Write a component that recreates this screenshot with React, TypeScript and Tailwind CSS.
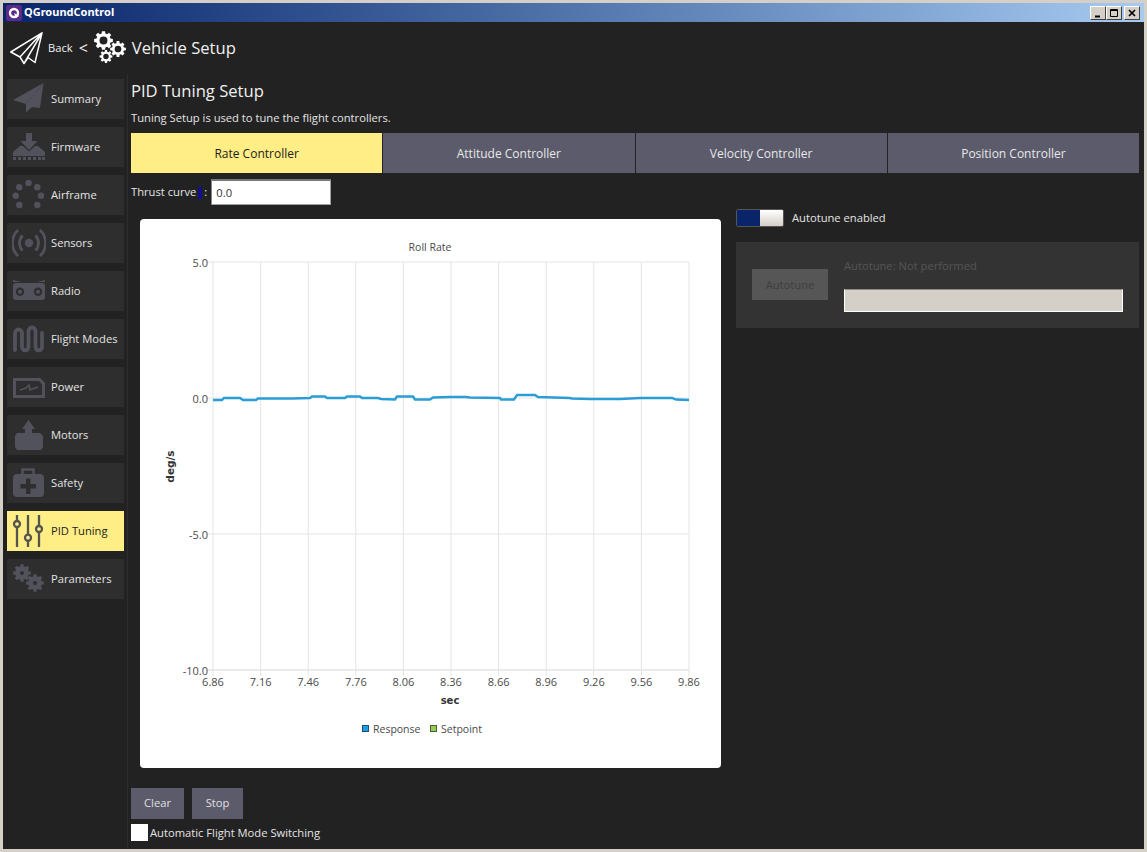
import React from "react";

const IC = "#52525c";

function gearPath(cx: number, cy: number, ro: number, ri: number, hole: number, teeth: number) {
  const pts: string[] = [];
  const step = (Math.PI * 2) / teeth;
  for (let i = 0; i < teeth; i++) {
    const a = i * step;
    const w = step * 0.27;
    const list: [number, number][] = [
      [a - w * 1.25, ri],
      [a - w * 0.8, ro],
      [a + w * 0.8, ro],
      [a + w * 1.25, ri],
    ];
    for (const [ang, r] of list) pts.push(`${(cx + Math.cos(ang) * r).toFixed(2)} ${(cy + Math.sin(ang) * r).toFixed(2)}`);
  }
  return `M${pts.join("L")}Z M${cx + hole} ${cy}A${hole} ${hole} 0 1 0 ${cx - hole} ${cy}A${hole} ${hole} 0 1 0 ${cx + hole} ${cy}Z`;
}

function Gear({ cx, cy, r, fill, teeth = 8, hole = 0.42 }: { cx: number; cy: number; r: number; fill: string; teeth?: number; hole?: number }) {
  return <path d={gearPath(cx, cy, r, r * 0.76, r * hole, teeth)} fill={fill} fillRule="evenodd" />;
}

const icons: Record<string, React.ReactNode> = {
  Summary: (
    <svg width="34" height="34" viewBox="0 0 34 34">
      <path d="M31.500 1 L1 18 L14 22 L14 30.500 L20 25 L28 26Z" fill={IC} />
      <path d="M31 2 L14 22" stroke="#46464f" strokeWidth="0.800" />
    </svg>
  ),
  Firmware: (
    <svg width="34" height="34" viewBox="0 0 34 34">
      <path d="M14 3h6v8h5.500l-8.500 9-8.500-9h5.500z" fill={IC} />
      <path d="M1 22 L8 16 L11 16 L17 21.500 L23 16 L26 16 L33 22 V26 H1Z" fill={IC} />
      <path d="M1 27h3v3H1zM6 27h3v3H6zM11 27h3v3h-3zM16 27h3v3h-3zM21 27h3v3h-3zM26 27h3v3h-3zM30 27h3v3h-3z" fill={IC} />
    </svg>
  ),
  Airframe: (
    <svg width="34" height="34" viewBox="0 0 34 34" fill={IC}>
      <circle cx="16.500" cy="5" r="3.200" />
      <circle cx="7.300" cy="9.300" r="3.200" />
      <circle cx="25.300" cy="9.300" r="3.200" />
      <circle cx="3.700" cy="17.700" r="3.200" />
      <circle cx="29" cy="17.700" r="3.200" />
      <circle cx="7.300" cy="27" r="3.200" />
      <circle cx="25.300" cy="27" r="3.200" />
    </svg>
  ),
  Sensors: (
    <svg width="34" height="34" viewBox="0 0 34 34" fill="none" stroke={IC}>
      <circle cx="17" cy="17" r="4.200" fill={IC} stroke="none" />
      <path d="M10.500 9.500a11 11 0 0 0 0 15M23.500 9.500a11 11 0 0 1 0 15" strokeWidth="2.800" />
      <path d="M6 4a18 18 0 0 0 0 26M28 4a18 18 0 0 1 0 26" strokeWidth="2.800" />
    </svg>
  ),
  Radio: (
    <svg width="34" height="34" viewBox="0 0 34 34">
      <path d="M1 6l8 2H1zM33 6l-8 2h8z" fill={IC} />
      <rect x="1" y="9" width="32" height="17" rx="3" fill={IC} />
      <circle cx="8" cy="17.700" r="4.200" fill="#2e2e2e" />
      <circle cx="26" cy="17.700" r="4.200" fill="#2e2e2e" />
      <circle cx="8" cy="17.700" r="2" fill={IC} />
      <circle cx="26" cy="17.700" r="2" fill={IC} />
    </svg>
  ),
  "Flight Modes": (
    <svg width="34" height="34" viewBox="0 0 34 34" fill="none">
      <path d="M3 28V11a3.500 3.500 0 0 1 7 0V25a3.250 3.250 0 0 0 6.500 0V9a3.500 3.500 0 0 1 7 0V25a3.250 3.250 0 0 0 6.500 0V11" stroke={IC} strokeWidth="3.800" strokeLinecap="round" />
    </svg>
  ),
  Power: (
    <svg width="34" height="34" viewBox="0 0 34 34" fill="none">
      <path d="M2.500 9.500h25l4 4v13h-29z" stroke={IC} strokeWidth="3" />
      <path d="M8 20l6-2 3-3 1 5 8-3" stroke={IC} strokeWidth="1.500" />
    </svg>
  ),
  Motors: (
    <svg width="34" height="34" viewBox="0 0 34 34">
      <path d="M16.500 2l6.500 9h-3v5h-7v-5h-3z" fill={IC} />
      <path d="M5 15h23l3 3v11l-2 3H5l-2-3V18z" fill={IC} />
    </svg>
  ),
  Safety: (
    <svg width="34" height="34" viewBox="0 0 34 34" fill="none">
      <path d="M10.500 10V3.500h11V10" stroke={IC} strokeWidth="2.500" />
      <rect x="1" y="8" width="31" height="23" rx="4" fill={IC} />
      <path d="M14 12.500h4.500v5.500h5.500v4.500h-5.500v5.500H14v-5.500H8.500V18H14z" fill="#2e2e2e" />
    </svg>
  ),
  "PID Tuning": (
    <svg width="34" height="34" viewBox="0 0 34 34" fill="none" stroke="#55554f" strokeWidth="2.300">
      <path d="M5 1v6M5 13v20M16 1v19.700M16 26.700v6.300M27 1v11M27 18v15" />
      <circle cx="5" cy="10" r="3" />
      <circle cx="16" cy="23.700" r="3" />
      <circle cx="27" cy="15" r="3" />
    </svg>
  ),
  Parameters: (
    <svg width="34" height="34" viewBox="0 0 34 34">
      <Gear cx={10} cy={11} r={9} fill={IC} hole={0.22} />
      <Gear cx={23} cy={21} r={9} fill={IC} hole={0.22} />
    </svg>
  ),
};

const menu = ["Summary", "Firmware", "Airframe", "Sensors", "Radio", "Flight Modes", "Power", "Motors", "Safety", "PID Tuning", "Parameters"];

function SideButton({ name }: { name: string }) {
  const active = name === "PID Tuning";
  return (
    <div className={`flex h-10 w-[117px] items-center ${active ? "bg-[#ffed86] text-[#1d1d1d]" : "bg-[#2e2e2e] text-[#e4e4e4]"}`}>
      <div className="flex w-11 shrink-0 justify-end pr-[5px]">{icons[name]}</div>
      <span className="whitespace-nowrap">{name}</span>
    </div>
  );
}

function Chart() {
  const xs = ["6.86", "7.16", "7.46", "7.76", "8.06", "8.36", "8.66", "8.96", "9.26", "9.56", "9.86"];
  const ys: [string, number][] = [["5.0", 262], ["0.0", 398], ["-5.0", 534], ["-10.0", 670]];
  const line =
    "213,400 222,400 224,398 240,398 243,400 256,400 258,398.500 275,398.500 292,398.500 310,398 312,396.500 325,396.500 327,398 345,398 347,396.500 360,396.500 362,398 378,398 381,399 395,399.500 397,396.500 413,396.500 415,399.500 430,399.500 433,397.500 450,397 466,397 470,397.500 500,398 501,399.500 514,399.500 517,395 535,395 538,397 570,398 572,398.500 590,399 620,399 640,398 672,398 676,399.500 689,400";
  const chartFont = { fontFamily: '"DejaVu Sans", sans-serif' };
  return (
    <svg width="581" height="549" viewBox="140 219 581 549" className="block rounded-[4px] bg-white" style={{ fontFamily: '"Open Sans", sans-serif' }}>
      {xs.map((_, i) => {
        const x = 213 + i * 47.6;
        return <line key={i} x1={x} x2={x} y1={262} y2={676} stroke="#e4e4e4" strokeWidth="1" />;
      })}
      {ys.map(([, y]) => (
        <line key={y} x1={207} x2={689} y1={y} y2={y} stroke="#e4e4e4" strokeWidth={y === 670 ? 1.500 : 1} />
      ))}
      {ys.map(([t, y]) => (
        <text key={t} x={208} y={y + 5} textAnchor="end" fontSize="11" fill="#4a4a4a">{t}</text>
      ))}
      {xs.map((t, i) => (
        <text key={t} x={213 + i * 47.6} y={686} textAnchor="middle" fontSize="11" fill="#4a4a4a">{t}</text>
      ))}
      <text x={430} y={251} textAnchor="middle" fontSize="10.500" fill="#4a4a4a">Roll Rate</text>
      <text x={450} y={704} textAnchor="middle" fontSize="10" fontWeight="700" fill="#333" style={chartFont}>sec</text>
      <text x={174} y={466.500} textAnchor="middle" fontSize="10.500" fontWeight="700" fill="#333" transform="rotate(-90 174 466.500)" style={chartFont}>deg/s</text>
      <polyline points={line} fill="none" stroke="#2b9dd6" strokeWidth="2.400" />
      <rect x={362.500} y={725.500} width={6} height={6} fill="#209fdf" stroke="#1f4f78" />
      <text x={373} y={733} fontSize="10.500" fill="#4a4a4a">Response</text>
      <rect x={430.500} y={725.500} width={6} height={6} fill="#99ca53" stroke="#4a6030" />
      <text x={441} y={733} fontSize="10.500" fill="#4a4a4a">Setpoint</text>
    </svg>
  );
}

export default function App() {
  const tabs = ["Rate Controller", "Attitude Controller", "Velocity Controller", "Position Controller"];
  return (
    <div className="flex h-[852px] w-[1147px] flex-col overflow-hidden border-[3px] border-[#d4d0c8] bg-[#222222] text-[11.2px] text-[#e4e4e4]" style={{ fontFamily: '"Open Sans", sans-serif' }}>
      {/* Title bar */}
      <div className="flex h-[19px] shrink-0 items-center justify-between bg-gradient-to-r from-[#0a246a] to-[#a6caf0] pl-[3px] pr-[4px]">
        <div className="flex items-center gap-[2px]">
          <svg width="16" height="16" viewBox="0 0 16 16">
            <rect width="16" height="16" rx="2" fill="#5b2b87" />
            <circle cx="8" cy="8" r="4" fill="none" stroke="#fff" strokeWidth="2.400" />
            <path d="M8 8l5 3-3 2z" fill="#fff" />
          </svg>
          <span className="text-[11px] font-bold text-white" style={{ fontFamily: '"Noto Sans", sans-serif' }}>QGroundControl</span>
        </div>
        <div className="flex">
          {["min", "max", "close"].map((k) => (
            <div key={k} className={`flex h-[14px] w-[16px] items-center justify-center border border-b-[#404040] border-l-white border-r-[#404040] border-t-white bg-[#d4d0c8] ${k === "close" ? "ml-[2px]" : ""}`}>
              <svg width="10" height="10" viewBox="0 0 10 10" fill="none" stroke="#000">
                {k === "min" && <path d="M2 8.500h5" strokeWidth="2" />}
                {k === "max" && <path d="M1.500 1.500h7v7h-7zM1.500 2.500h7" />}
                {k === "close" && <path d="M2 2l6 6M8 2l-6 6" strokeWidth="1.700" />}
              </svg>
            </div>
          ))}
        </div>
      </div>

      {/* Toolbar */}
      <div className="flex h-[52px] shrink-0 items-center pl-[7px]">
        <svg width="33" height="33" viewBox="0 0 33 33" fill="none" stroke="#fff" strokeWidth="1.500" strokeLinejoin="round" className="shrink-0">
          <path d="M32 .8 L.8 20 L10 25 L14 31.500 L18 25.500 L25 30.500Z M32 .8 L10 25 M32 .8 L14 31.500" />
        </svg>
        <span className="ml-[5px] text-[#f0f0f0]">Back</span>
        <span className="ml-[6px] text-[16px] leading-none text-[#f0f0f0]">&lt;</span>
        <svg width="34" height="34" viewBox="0 0 34 34" className="ml-[6px] shrink-0">
          <Gear cx={9.500} cy={9.500} r={9.500} fill="#fff" />
          <Gear cx={24} cy={18} r={8} fill="#fff" />
          <Gear cx={12} cy={25.500} r={6.500} fill="#fff" />
        </svg>
        <span className="ml-[4px] text-[16.600px] text-[#f0f0f0]">Vehicle Setup</span>
      </div>

      <div className="flex min-h-0 flex-1">
        {/* Sidebar */}
        <div className="flex w-[125px] shrink-0 flex-col gap-2 border-r border-[#2e2e2e] pl-[4px] pt-[5px]">
          {menu.map((m) => (
            <SideButton key={m} name={m} />
          ))}
        </div>

        {/* Main */}
        <div className="flex w-[1011px] flex-col pl-[3px] pt-[4px]">
          <div className="h-[26px] text-[16.600px] leading-[26px] text-[#f0f0f0]">PID Tuning Setup</div>
          <div className="mt-[6px] h-[16px] leading-[16px]">Tuning Setup is used to tune the flight controllers.</div>
          <div className="mt-[7px] flex h-10 gap-px">
            {tabs.map((t, i) => (
              <div key={t} className={`flex h-10 flex-1 items-center justify-center pt-px text-[12px] ${i === 0 ? "bg-[#ffed86] text-[#1d1d1d]" : "bg-[#5b5b6b] text-[#e8e8e8]"}`}>{t}</div>
            ))}
          </div>
          <div className="mt-[6px] flex h-[26px] items-center">
            <span className="whitespace-nowrap pt-px">Thrust curve</span>
            <span className="ml-[2px] mt-px inline-block w-[4px] bg-[#10108a] leading-[12px] text-[#10108a]">&nbsp;</span>
            <span className="ml-[2px] pt-px">:</span>
            <div className="ml-[4px] flex h-[26px] w-[120px] items-center border border-t-2 border-b-[#a0a0a0] border-l-[#888] border-r-[#a0a0a0] border-t-[#777] bg-white pl-[4px] pt-px text-[#333]">0.0</div>
          </div>

          <div className="mt-[3px] flex min-h-0">
            <div className="flex w-[605px] shrink-0 flex-col pl-[9px]">
              <div className="mt-[11px]">
                <Chart />
              </div>
            </div>
            <div className="mt-px flex w-[403px] flex-col">
              <div className="flex h-[18px] items-center">
                <div className="flex h-[18px] w-12 overflow-hidden rounded-[2px] border border-[#555]">
                  <div className="w-6 bg-[#0a246a]" />
                  <div className="w-6 bg-gradient-to-b from-white to-[#d4d0c8]" />
                </div>
                <span className="ml-2">Autotune enabled</span>
              </div>
              <div className="mt-[15px] flex h-[86px] items-start bg-[#333333] pl-4 pr-4">
                <div className="mt-[27px] flex h-[31px] w-[76px] shrink-0 items-center justify-center bg-[#565656] pt-px text-[#3e3e3e]">Autotune</div>
                <div className="ml-4 flex flex-1 flex-col pt-4">
                  <div className="h-[16px] leading-[16px] text-[#555555]">Autotune: Not performed</div>
                  <div className="mt-[15px] h-[23px] border border-b-white border-l-white border-r-white border-t-[#8c8984] bg-[#d4d0c8]" />
                </div>
              </div>
            </div>
          </div>

          <div className="mt-[20px] flex gap-2">
            <div className="flex h-[31px] w-[53px] items-center justify-center bg-[#5b5b6b] text-[#e0e0e0]">Clear</div>
            <div className="flex h-[31px] w-[51px] items-center justify-center bg-[#5b5b6b] text-[#e0e0e0]">Stop</div>
          </div>
          <div className="mt-[5px] flex h-[17px] items-center">
            <div className="h-[17px] w-[17px] bg-white" />
            <span className="ml-[2px] pt-px">Automatic Flight Mode Switching</span>
          </div>
        </div>
      </div>
    </div>
  );
}
